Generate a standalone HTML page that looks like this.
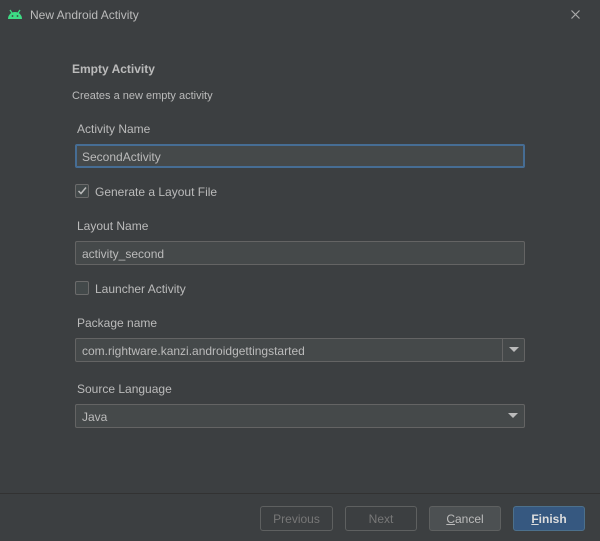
<!DOCTYPE html>
<html><head><style>
*{box-sizing:border-box;margin:0;padding:0}
body{width:600px;height:541px;background:#3c3f41;font-family:"Liberation Sans",sans-serif;font-size:12px;color:#bbbbbb;position:relative;overflow:hidden}
.a{position:absolute}
.f{position:absolute;left:75px;width:450px;height:24px;background:#45494a;border:1px solid #646464;border-radius:2px;padding:5px 6px;color:#bbbbbb}
.cb{position:absolute;left:75px;width:14px;height:14px;border:1px solid #6b6b6b;border-radius:2px;background:#43494a}
.btn{position:absolute;top:506px;height:25px;border:1px solid #5e6060;border-radius:3px;text-align:center;padding-top:5px}
.dd{position:absolute;right:0;top:0;width:22px;height:22px}
.tri{position:absolute;left:6px;top:8px;width:0;height:0;border-left:5px solid transparent;border-right:5px solid transparent;border-top:5px solid #bbbbbb}
</style></head><body>
<svg class="a" style="left:7px;top:9px" width="16" height="10" viewBox="0 0 16 10"><path d="M1 10 A7 7 0 0 1 15 10 Z" fill="#3ddc84"/><path d="M3 1 L5 4 M13 1 L11 4" stroke="#3ddc84" stroke-width="1.3"/><circle cx="5.5" cy="7" r="0.9" fill="#3c3f41"/><circle cx="10.5" cy="7" r="0.9" fill="#3c3f41"/></svg>
<div class="a" style="left:30px;top:8px;font-size:12px">New Android Activity</div>
<svg class="a" style="left:571px;top:10px" width="9" height="9"><path d="M0.5 0.5L8.5 8.5M8.5 0.5L0.5 8.5" stroke="#aaaaaa" stroke-width="1.2"/></svg>
<div class="a" style="left:72px;top:62px;font-weight:bold">Empty Activity</div>
<div class="a" style="left:72px;top:90px;font-size:11px">Creates a new empty activity</div>
<div class="a" style="left:77px;top:122px">Activity Name</div>
<div class="f" style="top:144px;border:2px solid #466d94;padding:4px 5px">SecondActivity</div>
<div class="cb" style="top:184px"><svg width="12" height="12" style="position:absolute;left:0;top:0"><path d="M2.5 6L5 8.5L10 2.5" stroke="#bbbbbb" stroke-width="1.5" fill="none"/></svg></div>
<div class="a" style="left:95px;top:185px">Generate a Layout File</div>
<div class="a" style="left:77px;top:219px">Layout Name</div>
<div class="f" style="top:241px">activity_second</div>
<div class="cb" style="top:281px"></div>
<div class="a" style="left:95px;top:282px">Launcher Activity</div>
<div class="a" style="left:77px;top:316px">Package name</div>
<div class="f" style="top:338px">com.rightware.kanzi.androidgettingstarted<div class="dd" style="border-left:1px solid #646464"><div class="tri"></div></div></div>
<div class="a" style="left:77px;top:382px">Source Language</div>
<div class="f" style="top:404px">Java<div class="dd"><div class="tri"></div></div></div>
<div class="a" style="left:0;top:493px;width:600px;height:1px;background:#323232"></div>
<div class="btn" style="left:260px;width:73px;color:#777">Previous</div>
<div class="btn" style="left:345px;width:72px;color:#777">Next</div>
<div class="btn" style="left:429px;width:72px;background:#4c5052;border-color:#5e6060"><u>C</u>ancel</div>
<div class="btn" style="left:513px;width:72px;background:#365880;border-color:#4c708c;font-weight:bold;color:#ddd"><u>F</u>inish</div>
</body></html>
